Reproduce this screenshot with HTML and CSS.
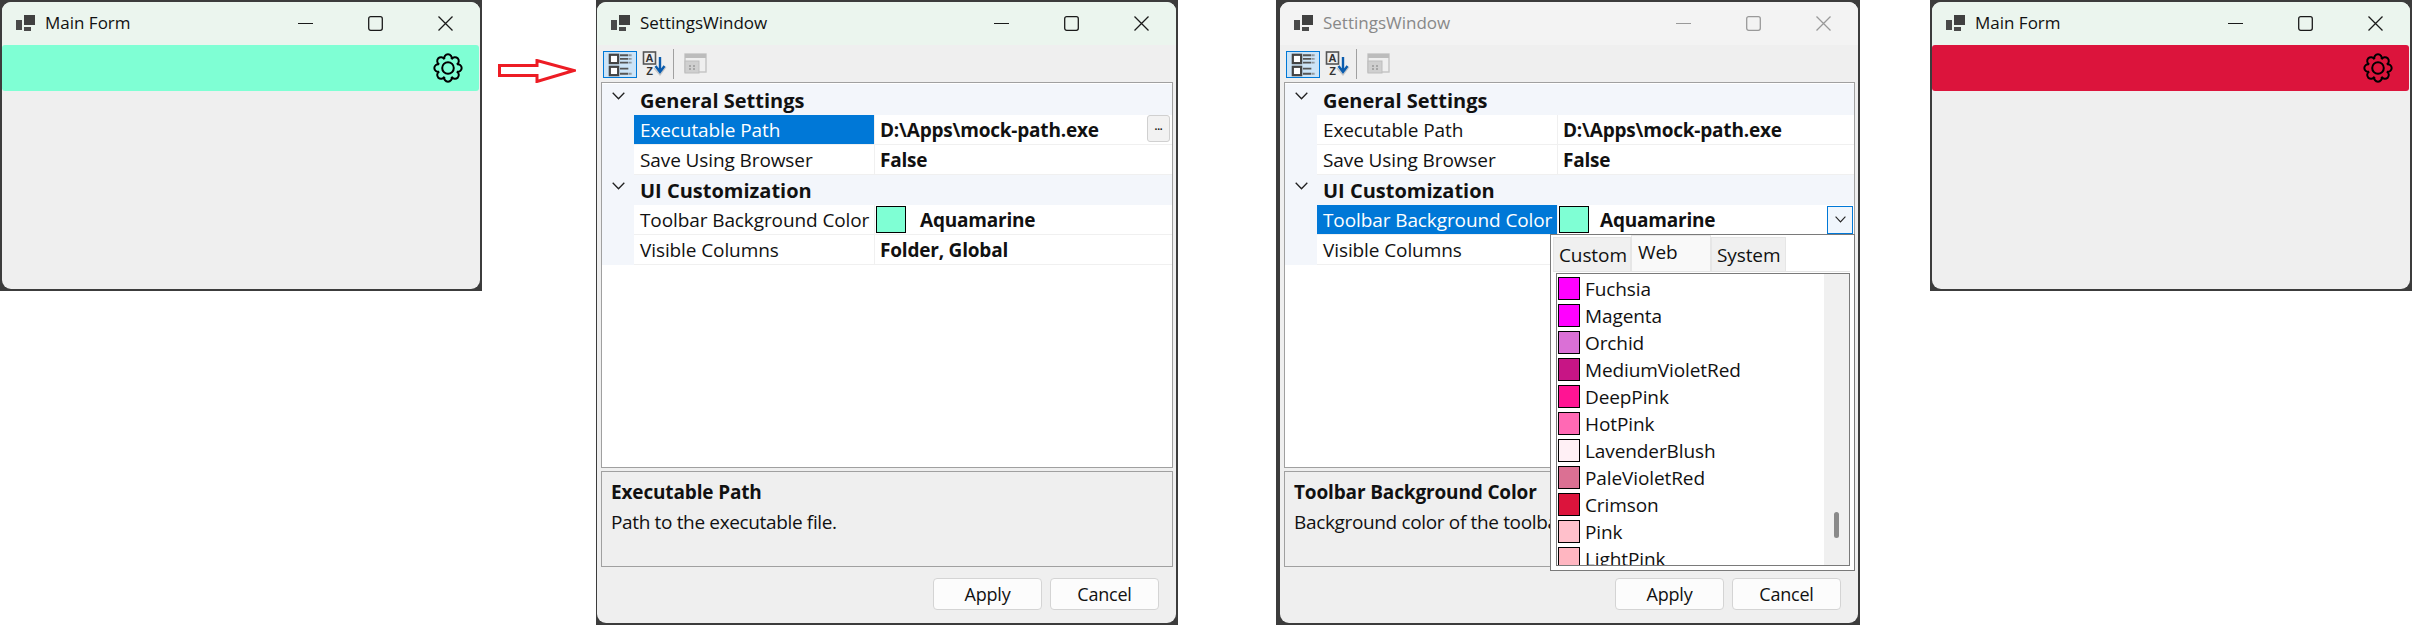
FILE: index.html
```html
<!DOCTYPE html>
<html lang="en">
  <head>
    <meta charset="UTF-8" />
    <title>Settings Window Demo</title>
    <link rel="stylesheet" href="styles.css">
  </head>
  <body>
    <svg class="defs" width="0" height="0">
      <symbol id="app" viewBox="0 0 20 18"><rect x="8" y="0" width="11" height="10" fill="#404040"/><rect x="0" y="5" width="6" height="10" fill="#4a4a4a"/><rect x="8" y="12" width="7" height="4" fill="#4a4a4a"/></symbol>
      <symbol id="gear" viewBox="0 0 30 30"><path d="M11.36 6.22A3.8 3.8 0 1 1 18.64 6.22A3.8 3.8 0 1 1 23.78 11.36A3.8 3.8 0 1 1 23.78 18.64A3.8 3.8 0 1 1 18.64 23.78A3.8 3.8 0 1 1 11.36 23.78A3.8 3.8 0 1 1 6.22 18.64A3.8 3.8 0 1 1 6.22 11.36A3.8 3.8 0 1 1 11.36 6.22Z" fill="none" stroke="#000" stroke-width="2"/><circle cx="15" cy="15" r="5.8" fill="none" stroke="#000" stroke-width="2"/></symbol>
      <symbol id="win-min" viewBox="0 0 15 15"><path d="M0 7.5H15" stroke="currentColor" stroke-width="1.2"/></symbol>
      <symbol id="win-max" viewBox="0 0 15 15"><rect x=".7" y=".7" width="13.6" height="13.6" rx="2" fill="none" stroke="currentColor" stroke-width="1.3"/></symbol>
      <symbol id="win-close" viewBox="0 0 15 15"><path d="M.5 .5L14.5 14.5M14.5 .5L.5 14.5" stroke="currentColor" stroke-width="1.3"/></symbol>
      <symbol id="chevron" viewBox="0 0 13 8"><path d="M.7 .7L6.5 6.8L12.3 .7" fill="none" stroke="#222" stroke-width="1.3"/></symbol>
      <symbol id="categorized" viewBox="0 0 34 27"><rect x="6" y="3" width="9" height="9" fill="#fff" stroke="#444" stroke-width="2.4"/><rect x="6" y="16" width="9" height="9" fill="#fff" stroke="#444" stroke-width="2.4"/><path d="M17 3.5H26M17 7.5H26M17 11.5H26M17 18H26M17 23.5H26" stroke="#555" stroke-width="2"/><path d="M27 3.5H30M27 7.5H30M27 11.5H30M27 23.5H30" stroke="#777" stroke-width="2" stroke-dasharray="1.5 1"/></symbol>
      <symbol id="alpha" viewBox="0 0 25 25"><rect x="1.5" y="1" width="12" height="12" fill="#eee" stroke="#555" stroke-width="1.6"/><text x="7.5" y="11" class="az">A</text><text x="7.5" y="24" class="az">Z</text><path d="M12 17L18 24L24 16" fill="none" stroke="#c4c4c4" stroke-width="1.2"/><path d="M18 6V20M13.5 15L18 21L22.5 15" fill="none" stroke="#0b5cad" stroke-width="2.4"/></symbol>
      <symbol id="pages" viewBox="0 0 23 21"><rect x="1" y="1" width="21" height="18" fill="none" stroke="#c4c4c4" stroke-width="1.4"/><rect x="1" y="1" width="21" height="4" fill="#bcbcbc"/><rect x="1" y="8" width="14" height="12" fill="#cfcfcf" stroke="#bdbdbd"/><path d="M5 13H7M9 13H11M5 16H7M9 16H11" stroke="#999" stroke-width="1.4"/></symbol>
    </svg>

    <!-- main form, before -->
    <div class="window window-main">
      <div class="window-inner">
        <div class="titlebar">
          <svg class="app-icon"><use href="#app"/></svg>
          <span class="title">Main Form</span>
          <div class="controls">
            <span class="control"><svg><use href="#win-min"/></svg></span>
            <span class="control"><svg><use href="#win-max"/></svg></span>
            <span class="control"><svg><use href="#win-close"/></svg></span>
          </div>
        </div>
        <div class="main-toolbar aquamarine">
          <svg class="gear"><use href="#gear"/></svg>
        </div>
      </div>
    </div>

    <svg class="arrow" viewBox="0 0 78 24">
      <polygon points="1.5,6.5 39,6.5 39,1.5 76,11.5 39,22.5 39,16.5 1.5,16.5" fill="#fff" stroke="#ed1c24" stroke-width="3"/>
    </svg>

    <!-- settings, path selected -->
    <div class="window window-settings">
      <div class="window-inner">
        <div class="titlebar">
          <svg class="app-icon"><use href="#app"/></svg>
          <span class="title">SettingsWindow</span>
          <div class="controls">
            <span class="control"><svg><use href="#win-min"/></svg></span>
            <span class="control"><svg><use href="#win-max"/></svg></span>
            <span class="control"><svg><use href="#win-close"/></svg></span>
          </div>
        </div>
        <div class="toolbar">
          <span class="tool tool-active"><svg class="icon-cat"><use href="#categorized"/></svg></span>
          <span class="tool"><svg class="icon-az"><use href="#alpha"/></svg></span>
          <span class="tool-sep"></span>
          <span class="tool"><svg class="icon-pages"><use href="#pages"/></svg></span>
        </div>
        <div class="grid">
          <div class="group"><svg class="chevron"><use href="#chevron"/></svg><span>General Settings</span></div>
          <div class="row">
            <div class="label selected">Executable Path</div>
            <div class="value">D:\Apps\mock-path.exe<span class="ellipsis">...</span></div>
          </div>
          <div class="row">
            <div class="label">Save Using Browser</div>
            <div class="value">False</div>
          </div>
          <div class="group"><svg class="chevron"><use href="#chevron"/></svg><span>UI Customization</span></div>
          <div class="row">
            <div class="label">Toolbar Background Color</div>
            <div class="value value-color"><span class="color-box aquamarine"></span>Aquamarine</div>
          </div>
          <div class="row">
            <div class="label">Visible Columns</div>
            <div class="value">Folder, Global</div>
          </div>
        </div>
        <div class="description">
          <h4>Executable Path</h4>
          <p>Path to the executable file.</p>
        </div>
        <div class="footer">
          <button class="btn">Apply</button>
          <button class="btn">Cancel</button>
        </div>
      </div>
    </div>

    <!-- settings, colour dropdown open -->
    <div class="window window-settings window-inactive">
      <div class="window-inner">
        <div class="titlebar">
          <svg class="app-icon"><use href="#app"/></svg>
          <span class="title">SettingsWindow</span>
          <div class="controls">
            <span class="control"><svg><use href="#win-min"/></svg></span>
            <span class="control"><svg><use href="#win-max"/></svg></span>
            <span class="control"><svg><use href="#win-close"/></svg></span>
          </div>
        </div>
        <div class="toolbar">
          <span class="tool tool-active"><svg class="icon-cat"><use href="#categorized"/></svg></span>
          <span class="tool"><svg class="icon-az"><use href="#alpha"/></svg></span>
          <span class="tool-sep"></span>
          <span class="tool"><svg class="icon-pages"><use href="#pages"/></svg></span>
        </div>
        <div class="grid">
          <div class="group"><svg class="chevron"><use href="#chevron"/></svg><span>General Settings</span></div>
          <div class="row">
            <div class="label">Executable Path</div>
            <div class="value">D:\Apps\mock-path.exe</div>
          </div>
          <div class="row">
            <div class="label">Save Using Browser</div>
            <div class="value">False</div>
          </div>
          <div class="group"><svg class="chevron"><use href="#chevron"/></svg><span>UI Customization</span></div>
          <div class="row">
            <div class="label selected">Toolbar Background Color</div>
            <div class="value value-color"><span class="color-box aquamarine"></span>Aquamarine<span class="drop-btn"><svg class="chevron-small"><use href="#chevron"/></svg></span></div>
          </div>
          <div class="row">
            <div class="label">Visible Columns</div>
            <div class="value"></div>
          </div>
        </div>
        <div class="description">
          <h4>Toolbar Background Color</h4>
          <p>Background color of the toolbar.</p>
        </div>
        <div class="footer">
          <button class="btn">Apply</button>
          <button class="btn">Cancel</button>
        </div>

        <div class="popup">
          <div class="tabs">
            <span class="tab tab-custom">Custom</span>
            <span class="tab tab-web">Web</span>
            <span class="tab tab-system">System</span>
          </div>
          <div class="color-list">
            <ul>
              <li><span class="swatch fuchsia"></span>Fuchsia</li>
              <li><span class="swatch fuchsia"></span>Magenta</li>
              <li><span class="swatch orchid"></span>Orchid</li>
              <li><span class="swatch medium-violet-red"></span>MediumVioletRed</li>
              <li><span class="swatch deep-pink"></span>DeepPink</li>
              <li><span class="swatch hot-pink"></span>HotPink</li>
              <li><span class="swatch lavender-blush"></span>LavenderBlush</li>
              <li><span class="swatch pale-violet-red"></span>PaleVioletRed</li>
              <li><span class="swatch crimson"></span>Crimson</li>
              <li><span class="swatch pink"></span>Pink</li>
              <li><span class="swatch light-pink"></span>LightPink</li>
            </ul>
            <div class="scrollbar"><span class="thumb"></span></div>
          </div>
        </div>
      </div>
    </div>

    <!-- main form, after -->
    <div class="window window-main window-last">
      <div class="window-inner">
        <div class="titlebar">
          <svg class="app-icon"><use href="#app"/></svg>
          <span class="title">Main Form</span>
          <div class="controls">
            <span class="control"><svg><use href="#win-min"/></svg></span>
            <span class="control"><svg><use href="#win-max"/></svg></span>
            <span class="control"><svg><use href="#win-close"/></svg></span>
          </div>
        </div>
        <div class="main-toolbar crimson">
          <svg class="gear"><use href="#gear"/></svg>
        </div>
      </div>
    </div>
  </body>
</html>
```

FILE: styles.css
```css
* {
  box-sizing: border-box;
}
html,
body {
  height: 100%;
}
body {
  margin: 0;
  display: flex;
  align-items: flex-start;
  background: white;
  color: #111;
  font-family: "Open Sans", sans-serif;
  font-size: 19px;
  letter-spacing: -0.1px;
  overflow: hidden;
}
.defs {
  display: none;
}
.az {
  font-family: "Liberation Sans", sans-serif;
  font-size: 11px;
  font-weight: 700;
  fill: #333;
  text-anchor: middle;
}

/* window frame */
.window {
  flex: none;
  padding: 2px;
  background: #3c3c3c;
}
.window-inner {
  position: relative;
  display: flex;
  flex-direction: column;
  height: 100%;
  background: #efefef;
  border-radius: 9px;
  overflow: hidden;
}
.window-main {
  width: 482px;
  height: 291px;
}
.window-settings {
  width: 582px;
  height: 625px;
  margin-left: 20px;
  padding-left: 1px;
}
.window-inactive {
  width: 584px;
  margin-left: 98px;
  padding-left: 4px;
}
.window-last {
  margin-left: 70px;
}
.arrow {
  flex: none;
  width: 78px;
  height: 24px;
  margin: 59px 0 0 16px;
}

/* title bar */
.titlebar {
  flex: none;
  display: flex;
  align-items: center;
  height: 43px;
  padding-left: 14px;
  background: #ebf5ee;
}
.app-icon {
  width: 20px;
  height: 18px;
  margin: 1px 9px 0 0;
}
.title {
  margin-top: -2px;
  font-size: 17px;
  letter-spacing: 0;
}
.controls {
  display: flex;
  margin-left: auto;
  color: #1a1a1a;
}
.control {
  display: flex;
  align-items: center;
  justify-content: center;
  width: 70px;
  height: 43px;
}
.control svg {
  width: 15px;
  height: 15px;
}
.window-inactive .titlebar {
  background: #f3f3f3;
}
.window-inactive .title {
  color: #888;
}
.window-inactive .controls {
  color: #999;
}

/* main form toolbar */
.main-toolbar {
  display: flex;
  align-items: center;
  justify-content: flex-end;
  height: 46px;
  margin-right: 1px;
  padding-right: 16px;
  border-radius: 3px;
}
.gear {
  width: 30px;
  height: 30px;
}

/* settings toolbar */
.toolbar {
  flex: none;
  display: flex;
  align-items: center;
  height: 37px;
  padding: 0 0 0 6px;
}
.tool {
  display: flex;
  align-items: center;
  justify-content: center;
  height: 27px;
}
.tool-active {
  width: 34px;
  margin-top: 1px;
  border: 1px solid #0078d7;
  background: #cce4f7;
}
.tool-sep {
  width: 1px;
  height: 30px;
  margin: 0 10px 0 6px;
  background: #a0a0a0;
}
.icon-cat {
  width: 32px;
  height: 25px;
}
.icon-az {
  width: 25px;
  height: 25px;
  margin-left: 5px;
}
.icon-pages {
  width: 23px;
  height: 21px;
}

/* property grid */
.grid {
  flex: 1;
  min-height: 0;
  margin: 0 3px 0 4px;
  padding-top: 1px;
  background: white;
  border: 1px solid #a0a0a0;
}
.group {
  display: flex;
  align-items: center;
  height: 30px;
  background: #f3f6fb;
  font-size: 20px;
  font-weight: 700;
  letter-spacing: 0;
}
.group:first-child {
  height: 31px;
}
.group span {
  margin-top: 1px;
}
.chevron {
  width: 13px;
  height: 8px;
  margin: -8px 15px 0 10px;
}
.row {
  display: flex;
  height: 30px;
  padding-left: 32px;
  background: #f3f6fb;
}
.label {
  flex: none;
  display: flex;
  align-items: center;
  width: 241px;
  padding: 0 0 0 6px;
  background: white;
  border-right: 1px solid #f0f0f0;
  border-bottom: 1px solid #f0f0f0;
  white-space: nowrap;
}
.selected {
  background: #0078d7;
  color: white;
}
.value {
  flex: 1;
  display: flex;
  align-items: center;
  padding: 0 2px 0 5px;
  background: white;
  border-bottom: 1px solid #f0f0f0;
  font-weight: 700;
  letter-spacing: -0.2px;
}
.value-color {
  padding: 0 1px 0 1px;
}
.color-box {
  flex: none;
  width: 30px;
  height: 27px;
  margin-right: 14px;
  border: 1px solid black;
}
.window-inactive .color-box {
  margin-right: 11px;
}
.ellipsis {
  display: flex;
  align-items: center;
  justify-content: center;
  width: 23px;
  height: 27px;
  margin: -2px 0 0 auto;
  padding-bottom: 6px;
  background: #f2f2f2;
  border: 1px solid #d0d0d0;
  border-radius: 3px;
  font-size: 10px;
  line-height: 1;
}
.drop-btn {
  display: flex;
  align-items: center;
  justify-content: center;
  width: 26px;
  height: 28px;
  margin-left: auto;
  background: #f0f6fc;
  border: 1px solid #0078d7;
}
.chevron-small {
  width: 11px;
  height: 7px;
}

/* description panel */
.description {
  flex: none;
  height: 96px;
  margin: 3px 3px 0 4px;
  padding: 7px 9px;
  border: 1px solid #a0a0a0;
  white-space: nowrap;
}
.description h4 {
  margin: 0;
  font-size: inherit;
  font-weight: 700;
  letter-spacing: -0.15px;
}
.description p {
  margin: 4px 0 0;
  letter-spacing: -0.35px;
}

/* footer buttons */
.footer {
  flex: none;
  display: flex;
  justify-content: flex-end;
  gap: 8px;
  height: 56px;
  padding: 11px 17px 0 0;
}
.btn {
  width: 109px;
  height: 32px;
  padding: 0;
  background: #fcfcfc;
  border: 1px solid #d4d4d4;
  border-radius: 4px;
  color: inherit;
  font-family: inherit;
  font-size: 18px;
  letter-spacing: -0.2px;
}

/* colour dropdown */
.popup {
  position: absolute;
  top: 232px;
  left: 270px;
  display: flex;
  flex-direction: column;
  width: 305px;
  height: 337px;
  padding: 0 4px 4px 2px;
  background: white;
  border: 1px solid #7a7a7a;
}
.tabs {
  flex: none;
  display: flex;
  align-items: flex-end;
  height: 37px;
  border-bottom: 1px solid #e4e4e4;
}
.tab {
  display: flex;
  align-items: center;
  height: 34px;
  padding-left: 5px;
  background: #f0f0f0;
  border: 1px solid #e6e6e6;
  border-bottom: 0;
}
.tab-custom {
  width: 78px;
}
.tab-web {
  width: 80px;
  height: 36px;
  padding: 0 0 3px 6px;
  background: #f9f9f9;
}
.tab-system {
  width: 75px;
}
.color-list {
  flex: 1;
  min-height: 0;
  display: flex;
  margin: 1px 0 0 3px;
  border: 1px solid #7a7a7a;
}
.color-list ul {
  flex: 1;
  margin: 0;
  padding: 1px 0 0 1px;
  list-style: none;
  overflow: hidden;
}
.color-list li {
  display: flex;
  align-items: center;
  gap: 5px;
  height: 27px;
}
.swatch {
  flex: none;
  width: 22px;
  height: 23px;
  border: 1px solid black;
}
.scrollbar {
  flex: none;
  width: 25px;
  padding: 238px 0 0 10px;
  background: #f0f0f0;
}
.thumb {
  display: block;
  width: 5px;
  height: 26px;
  background: #8a8a8a;
  border-radius: 3px;
}

/* named colours */
.aquamarine { background: #7fffd4; }
.crimson { background: #dc143c; }
.fuchsia { background: #ff00ff; }
.orchid { background: #da70d6; }
.medium-violet-red { background: #c71585; }
.deep-pink { background: #ff1493; }
.hot-pink { background: #ff69b4; }
.lavender-blush { background: #fff0f5; }
.pale-violet-red { background: #db7093; }
.pink { background: #ffc0cb; }
.light-pink { background: #ffb6c1; }
```
